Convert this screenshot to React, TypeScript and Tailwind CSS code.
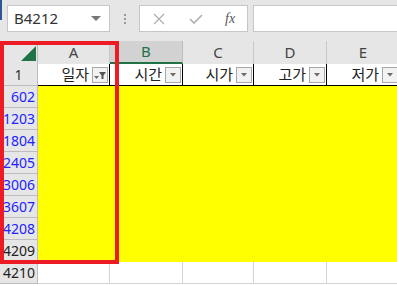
import React from "react";

const cols = [
  { l: "A", w: 72, h: "일자", f: true },
  { l: "B", w: 73, h: "시간" },
  { l: "C", w: 71, h: "시가" },
  { l: "D", w: 73, h: "고가" },
  { l: "E", w: 73, h: "저가" },
];

const rows: { n: string; blue: boolean; y: boolean }[] = [
  { n: "602", blue: true, y: true },
  { n: "1203", blue: true, y: true },
  { n: "1804", blue: true, y: true },
  { n: "2405", blue: true, y: true },
  { n: "3006", blue: true, y: true },
  { n: "3607", blue: true, y: true },
  { n: "4208", blue: true, y: true },
  { n: "4209", blue: false, y: true },
  { n: "4210", blue: false, y: false },
];

function FilterBtn({ filtered }: { filtered?: boolean }) {
  return (
    <div className="w-[16px] h-[16px] border border-[#a8a8a8] bg-[#f2f2f2] flex items-center justify-center shrink-0">
      {filtered ? (
        <svg width="14" height="12" viewBox="0 0 14 12">
          <polygon points="1,7 6,7 3.5,10" fill="#6b6b6b" />
          <polygon points="6,3 13,3 10.5,6.5 10.5,10 8.5,10 8.5,6.5" fill="#555" />
        </svg>
      ) : (
        <svg width="10" height="6" viewBox="0 0 10 6">
          <polygon points="2,1 8,1 5,4.5" fill="#6b6b6b" />
        </svg>
      )}
    </div>
  );
}

export default function App() {
  const font = { fontFamily: '"Noto Sans","Noto Sans CJK KR",sans-serif' };
  return (
    <div className="relative w-[397px] h-[286px] overflow-hidden bg-white" style={font}>
      {/* toolbar */}
      <div className="relative h-[41px] bg-[#e6e6e6] flex items-start pt-[5px]">
        <div className="absolute left-0 top-0 w-[2px] h-[20px] bg-[#2b5797]" />
        <div className="ml-[7px] w-[103px] h-[27px] bg-white border border-[#c6c6c6] flex items-center pl-[6px] pr-[8px]">
          <span className="text-[15px] text-[#333] flex-1 leading-none">B4212</span>
          <svg width="10" height="6" viewBox="0 0 10 6">
            <polygon points="0,0 10,0 5,5" fill="#777" />
          </svg>
        </div>
        <div className="w-[29px] h-[27px] flex flex-col items-center justify-center gap-[2px]">
          <div className="w-[2px] h-[2px] bg-[#9a9a9a]" />
          <div className="w-[2px] h-[2px] bg-[#9a9a9a]" />
          <div className="w-[2px] h-[2px] bg-[#9a9a9a]" />
        </div>
        <div className="w-[109px] h-[27px] bg-white border border-[#c6c6c6] flex items-center">
          <svg className="ml-[13px]" width="12" height="12" viewBox="0 0 12 12">
            <path d="M1 1 L11 11 M11 1 L1 11" stroke="#b0b0b0" strokeWidth="1.3" />
          </svg>
          <svg className="ml-[24px]" width="14" height="12" viewBox="0 0 14 12">
            <path d="M1 6 L5 10 L13 2" stroke="#b0b0b0" strokeWidth="1.6" fill="none" />
          </svg>
          <span
            className="ml-[22px] text-[14px] italic text-[#555] leading-none"
            style={{ fontFamily: '"Liberation Serif",serif' }}
          >
            fx
          </span>
        </div>
        <div className="ml-[5px] flex-1 h-[27px] bg-white border border-[#c6c6c6] border-r-0" />
      </div>

      {/* column headers */}
      <div className="flex h-[23px] bg-[#e6e6e6]">
        <div className="w-[38px] h-full border-r border-[#bdbdbd] relative shrink-0">
          <svg className="absolute left-[21px] top-[5px]" width="15" height="15" viewBox="0 0 15 15">
            <polygon points="15,0 15,15 0,15" fill="#217346" />
          </svg>
        </div>
        {cols.map((c) => (
          <div
            key={c.l}
            style={{ width: c.w }}
            className={
              "shrink-0 h-full flex items-center justify-center text-[15px] leading-none border-r " +
              (c.l === "B"
                ? "bg-[#d2d2d2] text-[#217346] border-[#bdbdbd] border-b-2 border-b-[#217346]"
                : "text-[#444] border-[#c8c8c8]")
            }
          >
            {c.l}
          </div>
        ))}
      </div>

      {/* row 1 */}
      <div className="flex h-[22px]">
        <div className="w-[38px] shrink-0 bg-[#e6e6e6] border-r border-b border-[#bdbdbd] flex items-center justify-center text-[14px] text-[#333] leading-none">
          1
        </div>
        {cols.map((c) => (
          <div
            key={c.l}
            style={{ width: c.w }}
            className="shrink-0 h-full border-r border-b border-black flex items-center justify-end pr-px gap-[3px]"
          >
            <span className="text-[15px] text-[#222] leading-none">{c.h}</span>
            <FilterBtn filtered={c.f} />
          </div>
        ))}
      </div>

      {/* data rows */}
      {rows.map((r) => (
        <div key={r.n} className="flex h-[22px]">
          <div
            className={
              "w-[38px] shrink-0 bg-[#e6e6e6] border-r border-b border-[#bdbdbd] flex items-center justify-end pr-[2px] text-[14px] leading-none " +
              (r.blue ? "text-[#2323ff]" : "text-[#222]")
            }
          >
            {r.n}
          </div>
          {r.y ? (
            <div className="flex-1 bg-[#ffff00]" />
          ) : (
            <div className="flex flex-1">
              {cols.map((c) => (
                <div
                  key={c.l}
                  style={{ width: c.w }}
                  className="shrink-0 h-full border-r border-b border-[#d4d4d4]"
                />
              ))}
            </div>
          )}
        </div>
      ))}

      {/* red highlight box */}
      <div className="absolute left-0 top-[41px] w-[119px] h-[223px] border-4 border-[#ed1c24]" />
    </div>
  );
}
